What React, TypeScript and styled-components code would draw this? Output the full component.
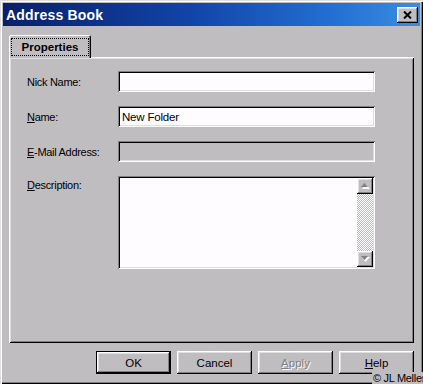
import React from 'react';
import styled, {createGlobalStyle} from 'styled-components';

const GlobalStyle = createGlobalStyle`
    html, body {
        margin: 0;
        padding: 0;
        background: #c0bdc0;
    }
    body {
        font-family: "Liberation Sans", Arial, sans-serif;
        font-size: 11px;
        color: #000;
    }
`;

const raised = `
    box-shadow: inset -1px -1px #000, inset 1px 1px #fff, inset -2px -2px #808080, inset 2px 2px #dfdfdf;
`;

const sunken = `
    box-shadow: inset 1px 1px #808080, inset -1px -1px #fff, inset 2px 2px #000, inset -2px -2px #dfdfdf;
`;

const Window = styled.div`
    position: relative;
    width: 423px;
    height: 384px;
    box-sizing: border-box;
    padding: 3px;
    background: #c0bdc0;
    overflow: hidden;
    display: flex;
    flex-direction: column;
    box-shadow: inset 1px 1px #dfdfdf, inset 2px 2px #fff, inset -1px -1px #000, inset -2px -2px #808080;
`;

const TitleBar = styled.div`
    height: 23px;
    flex-shrink: 0;
    display: flex;
    align-items: center;
    justify-content: space-between;
    padding: 0 2px 0 3px;
    background: linear-gradient(90deg, #08206a 0%, #1244a8 45%, #2470d4 80%, #3a8ee0 100%);
`;

const TitleText = styled.span`
    color: #fff;
    font-weight: bold;
    font-size: 14px;
    letter-spacing: 0.2px;
`;

const CloseButton = styled.div`
    width: 21px;
    height: 16px;
    margin-top: 1px;
    background: #c0bdc0;
    display: flex;
    align-items: center;
    justify-content: center;
    ${raised}
`;

const Body = styled.div`
    flex: 1;
    display: flex;
    flex-direction: column;
    padding: 9px 6px 0 6px;
`;

const TabStrip = styled.div`
    display: flex;
    height: 23px;
    margin-bottom: -1px;
    position: relative;
    z-index: 1;
`;

const Tab = styled.div`
    width: 82px;
    box-sizing: border-box;
    padding: 3px 2px 0 2px;
    background: #c0bdc0;
    border-radius: 2px 2px 0 0;
    box-shadow: inset 1px 1px #fff, inset -1px 0 #000, inset -2px 0 #808080;
`;

const TabLabel = styled.div`
    height: 18px;
    display: flex;
    align-items: center;
    justify-content: center;
    font-weight: bold;
    font-size: 11.5px;
    outline: 1px dotted #000;
    outline-offset: -1px;
`;

const Panel = styled.div`
    flex: 1;
    padding: 14px 39px 0 18px;
    box-shadow: inset 1px 1px #fff, inset -1px -1px #000, inset 2px 2px #dfdfdf, inset -2px -2px #808080;
`;

const Form = styled.div`
    display: grid;
    grid-template-columns: 91px 257px;
    row-gap: 14px;
`;

const Label = styled.label<{ $top?: boolean }>`
    display: flex;
    align-items: ${p => (p.$top ? 'flex-start' : 'center')};
    padding-top: ${p => (p.$top ? '3px' : '0')};
    font-size: 11px;
    letter-spacing: -0.3px;
`;

const Field = styled.div<{ $disabled?: boolean }>`
    height: 21px;
    box-sizing: border-box;
    padding: 0 4px;
    display: flex;
    align-items: center;
    font-size: 11.5px;
    letter-spacing: -0.2px;
    background: ${p => (p.$disabled ? '#c0bdc0' : '#fffcff')};
    ${sunken}
`;

const TextArea = styled.div`
    height: 93px;
    box-sizing: border-box;
    padding: 2px;
    display: flex;
    justify-content: flex-end;
    background: #fffcff;
    ${sunken}
`;

const ScrollBar = styled.div`
    width: 16px;
    display: flex;
    flex-direction: column;
    justify-content: space-between;
    background: repeating-conic-gradient(#fff 0 25%, #c0bdc0 0 50%) 0 0 / 2px 2px;
`;

const ScrollArrow = styled.div`
    width: 16px;
    height: 16px;
    box-sizing: border-box;
    background: #c0bdc0;
    display: flex;
    align-items: center;
    justify-content: center;
    ${raised}
`;

const ButtonRow = styled.div`
    display: flex;
    justify-content: flex-end;
    gap: 6px;
    padding: 8px 0 7px 0;
`;

const Button = styled.div<{ $default?: boolean; $disabled?: boolean }>`
    width: 75px;
    height: 23px;
    box-sizing: border-box;
    display: flex;
    align-items: center;
    justify-content: center;
    font-size: 11.5px;
    background: #c0bdc0;
    color: ${p => (p.$disabled ? '#808080' : '#000')};
    text-shadow: ${p => (p.$disabled ? '1px 1px #fff' : 'none')};
    border: ${p => (p.$default ? '1px solid #000' : 'none')};
    ${raised}
`;

const Copyright = styled.div`
    position: absolute;
    left: 372px;
    top: 372px;
    padding: 0 1px;
    font-size: 11px;
    letter-spacing: -0.3px;
    line-height: 12px;
    white-space: nowrap;
    background: #c0bdc0;
`;

const Arrow = ({up}: { up?: boolean }) => (
    <svg width="9" height="6" viewBox="0 0 9 6">
        {up ? (
            <>
                <polygon points="4.5,1 9,6 1,6" fill="#fff"/>
                <polygon points="3.5,0 7,4 0,4" fill="#808080"/>
            </>
        ) : (
            <>
                <polygon points="1,1 9,1 4.5,6" fill="#fff"/>
                <polygon points="0,0 7,0 3.5,4" fill="#808080"/>
            </>
        )}
    </svg>
);

export default function App() {
    return (
        <>
            <GlobalStyle/>
            <Window>
                <TitleBar>
                    <TitleText>Address Book</TitleText>
                    <CloseButton>
                        <svg width="9" height="8" viewBox="0 0 9 8">
                            <path d="M1 0.5 L8 7.5 M8 0.5 L1 7.5" stroke="#000" strokeWidth="2"/>
                        </svg>
                    </CloseButton>
                </TitleBar>
                <Body>
                    <TabStrip>
                        <Tab>
                            <TabLabel>Properties</TabLabel>
                        </Tab>
                    </TabStrip>
                    <Panel>
                        <Form>
                            <Label>Nick Name:</Label>
                            <Field/>
                            <Label><u>N</u>ame:</Label>
                            <Field>New Folder</Field>
                            <Label><u>E</u>-Mail Address:</Label>
                            <Field $disabled/>
                            <Label $top><u>D</u>escription:</Label>
                            <TextArea>
                                <ScrollBar>
                                    <ScrollArrow><Arrow up/></ScrollArrow>
                                    <ScrollArrow><Arrow/></ScrollArrow>
                                </ScrollBar>
                            </TextArea>
                        </Form>
                    </Panel>
                    <ButtonRow>
                        <Button $default>OK</Button>
                        <Button>Cancel</Button>
                        <Button $disabled><u>A</u>pply</Button>
                        <Button><u>H</u>elp</Button>
                    </ButtonRow>
                </Body>
                <Copyright>© JL Meller</Copyright>
            </Window>
        </>
    );
}
